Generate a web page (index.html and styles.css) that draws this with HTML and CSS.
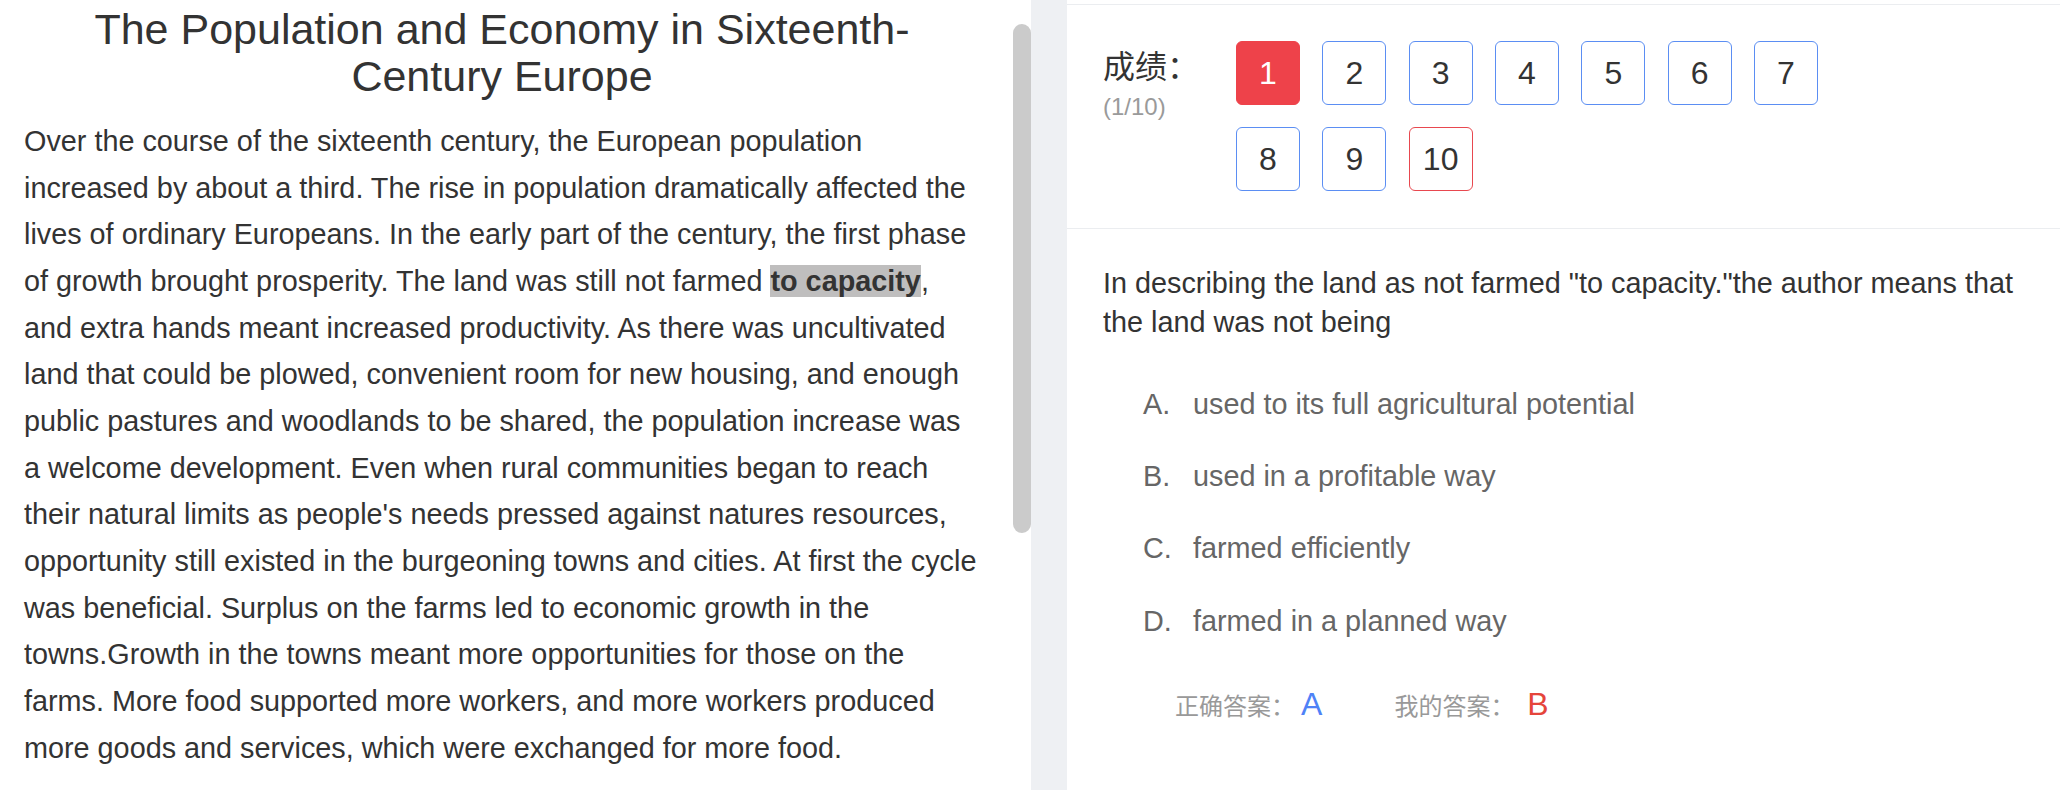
FILE: index.html
```html
<!DOCTYPE html>
<html lang="zh-CN">
<head>
<meta charset="utf-8">
<title>Reading</title>
<link rel="stylesheet" href="styles.css">
</head>
<body>
<div class="page">
  <section class="left">
    <article class="article">
      <h1 class="title">The Population and Economy in Sixteenth-Century Europe</h1>
      <p class="passage">Over the course of the sixteenth century, the European population increased by about a third. The rise in population dramatically affected the lives of ordinary Europeans. In the early part of the century, the first phase of growth brought prosperity. The land was still not farmed <span class="mark">to capacity</span>, and extra hands meant increased productivity. As there was uncultivated land that could be plowed, convenient room for new housing, and enough public pastures and woodlands to be shared, the population increase was a welcome development. Even when rural communities began to reach their natural limits as people's needs pressed against natures resources, opportunity still existed in the burgeoning towns and cities. At first the cycle was beneficial. Surplus on the farms led to economic growth in the towns.Growth in the towns meant more opportunities for those on the farms. More food supported more workers, and more workers produced more goods and services, which were exchanged for more food.</p>
    </article>
    <div class="scrollbar"><div class="thumb"></div></div>
  </section>
  <section class="right">
    <div class="top-strip"></div>
    <div class="score">
      <div class="score-label">
        <div class="score-title">成绩：</div>
        <div class="score-count">(1/10)</div>
      </div>
      <div class="nums">
        <div class="num wrong-current">1</div>
        <div class="num">2</div>
        <div class="num">3</div>
        <div class="num">4</div>
        <div class="num">5</div>
        <div class="num">6</div>
        <div class="num">7</div>
        <div class="num">8</div>
        <div class="num">9</div>
        <div class="num wrong">10</div>
      </div>
    </div>
    <div class="question">
      <p class="stem">In describing the land as not farmed "to capacity."the author means that the land was not being</p>
      <ul class="options">
        <li class="option"><span class="letter">A.</span><span>used to its full agricultural potential</span></li>
        <li class="option"><span class="letter">B.</span><span>used in a profitable way</span></li>
        <li class="option"><span class="letter">C.</span><span>farmed efficiently</span></li>
        <li class="option"><span class="letter">D.</span><span>farmed in a planned way</span></li>
      </ul>
      <div class="answers">
        <div class="answer"><span class="answer-label">正确答案：</span><span class="answer-val correct">A</span></div>
        <div class="answer"><span class="answer-label">我的答案：</span><span class="answer-val mine">B</span></div>
      </div>
    </div>
  </section>
</div>
</body>
</html>
```

FILE: styles.css
```css
* { box-sizing: border-box; }
html, body { margin: 0; padding: 0; }
body {
  font-family: "Liberation Sans", Arial, "Noto Sans CJK SC", sans-serif;
  color: #333;
  background: #eef0f3;
}
.page {
  display: flex;
  height: 790px;
  overflow: hidden;
  background: #eef0f3;
}
.left {
  width: 1031px;
  flex: 0 0 1031px;
  display: flex;
  background: #fff;
}
.article {
  flex: 1;
  padding: 6px 33px 0 24px;
  overflow: hidden;
}
.title {
  margin: 0 0 18.5px;
  font-size: 43px;
  line-height: 46.67px;
  font-weight: normal;
  text-align: center;
  color: #333;
}
.passage {
  margin: 0;
  font-size: 28.8px;
  line-height: 46.67px;
  color: #333;
}
.mark {
  font-weight: bold;
  background: #bfbebe;
}
.scrollbar {
  width: 18px;
  flex: 0 0 18px;
  background: #fff;
}
.thumb {
  margin-top: 24px;
  height: 509px;
  border-radius: 9px;
  background: #cbcbcb;
}
.right {
  flex: 1;
  margin-left: 36px;
  background: #fff;
}
.top-strip {
  height: 5px;
  border-bottom: 1px solid #ebedf0;
}
.score {
  display: flex;
  padding: 36px 36px 37px 36px;
  border-bottom: 1px solid #ebedf0;
}
.score-label {
  width: 133px;
  flex: 0 0 133px;
  padding-top: 4px;
}
.score-title {
  font-size: 32px;
  line-height: 44px;
  color: #333;
}
.score-count {
  padding-top: 2.5px;
  font-size: 24px;
  line-height: 30px;
  color: #9a9a9a;
}
.nums {
  display: flex;
  flex-wrap: wrap;
  gap: 22px 22.33px;
  width: 620px;
}
.num {
  width: 64px;
  height: 64px;
  border: 1px solid #5b8ef3;
  border-radius: 6px;
  display: flex;
  align-items: center;
  justify-content: center;
  font-size: 32px;
  color: #333;
}
.num.wrong-current {
  background: #ee424a;
  border-color: #ee424a;
  color: #fff;
}
.num.wrong {
  border-color: #e8484f;
}
.question {
  padding: 35px 36px 0 36px;
}
.stem {
  margin: 0;
  font-size: 28.8px;
  line-height: 39.4px;
  color: #333;
}
.options {
  list-style: none;
  margin: 24.75px 0 0;
  padding: 0 0 0 40px;
}
.option {
  display: flex;
  padding: 16.15px 0;
  font-size: 28.8px;
  line-height: 40px;
  color: #666;
}
.letter {
  width: 50px;
  flex: 0 0 50px;
}
.answers {
  display: flex;
  margin-top: 27.4px;
  padding-left: 72px;
  font-size: 32px;
  line-height: 40px;
}
.answer {
  display: flex;
  align-items: baseline;
}
.answer:first-child {
  width: 219.6px;
}
.answer-label {
  font-size: 24px;
  color: #999;
}
.answer-val {
  margin-left: 6px;
  font-size: 32px;
}
.answer-val.correct { color: #4f82f7; }
.answer-val.mine { margin-left: 12.6px; color: #e5453b; }
```
